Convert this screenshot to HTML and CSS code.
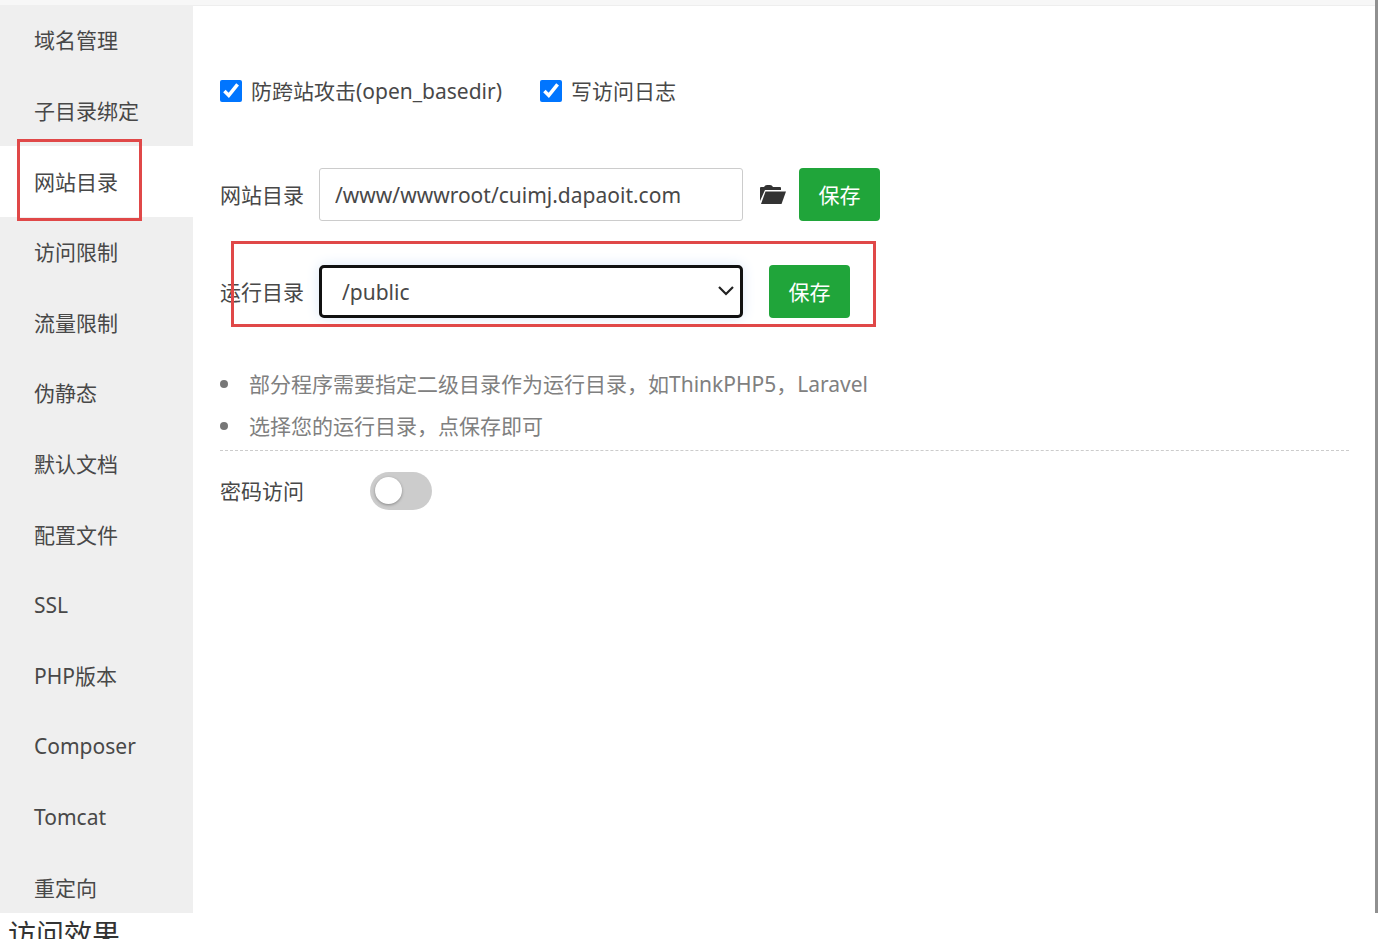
FILE: index.html
```html
<!DOCTYPE html>
<html lang="zh-CN">
<head>
<meta charset="utf-8">
<title>网站目录</title>
<link rel="stylesheet" href="styles.css">
</head>
<body>
<div class="dialog">
  <nav class="sidebar">
    <ul class="menu">
      <li class="menu-item"><a href="#">域名管理</a></li>
      <li class="menu-item"><a href="#">子目录绑定</a></li>
      <li class="menu-item active"><a href="#">网站目录</a></li>
      <li class="menu-item"><a href="#">访问限制</a></li>
      <li class="menu-item"><a href="#">流量限制</a></li>
      <li class="menu-item"><a href="#">伪静态</a></li>
      <li class="menu-item"><a href="#">默认文档</a></li>
      <li class="menu-item"><a href="#">配置文件</a></li>
      <li class="menu-item"><a href="#">SSL</a></li>
      <li class="menu-item"><a href="#">PHP版本</a></li>
      <li class="menu-item"><a href="#">Composer</a></li>
      <li class="menu-item"><a href="#">Tomcat</a></li>
      <li class="menu-item"><a href="#">重定向</a></li>
    </ul>
  </nav>
  <main class="content">
    <div class="checks">
      <label class="check"><input type="checkbox" checked>防跨站攻击(open_basedir)</label>
      <label class="check"><input type="checkbox" checked>写访问日志</label>
    </div>
    <div class="row">
      <label class="row-label" for="site-dir">网站目录</label>
      <input class="field" id="site-dir" type="text" value="/www/wwwroot/cuimj.dapaoit.com">
      <button class="browse" type="button" aria-label="选择目录">
        <svg width="26" height="20" viewBox="0 0 26 20"><path fill="#333" d="M0 16V3q0-1 1-1h3q1-2 3-2h3q2 0 3 2h7q1 0 1 1v2H5z"/><path fill="#333" d="M5.500 6.500H26L21.500 19H1z"/></svg>
      </button>
      <button class="save" type="button">保存</button>
    </div>
    <div class="row run-row">
      <label class="row-label" for="run-dir">运行目录</label>
      <div class="select-wrap">
        <select class="field run-select" id="run-dir"><option>/public</option></select>
        <svg class="chevron" width="16" height="10" viewBox="0 0 16 10"><path d="M1 1l7 7 7-7" fill="none" stroke="#222" stroke-width="2.200"/></svg>
      </div>
      <button class="save" type="button">保存</button>
    </div>
    <ul class="tips">
      <li>部分程序需要指定二级目录作为运行目录，如ThinkPHP5，Laravel</li>
      <li>选择您的运行目录，点保存即可</li>
    </ul>
    <div class="password">
      <label for="password-access">密码访问</label>
      <input class="switch" id="password-access" type="checkbox" role="switch">
    </div>
  </main>
</div>
<p class="caption">访问效果</p>
</body>
</html>
```
FILE: styles.css
```css
* {
  box-sizing: border-box;
}

body {
  margin: 0;
  height: 100vh;
  display: flex;
  flex-direction: column;
  overflow: hidden;
  background: #fff;
  color: #484848;
  font: 21px/28px "Noto Sans", "Noto Sans CJK SC", sans-serif;
}

input,
select,
button {
  margin: 0;
  font: inherit;
  color: inherit;
}

.dialog {
  flex: 1;
  min-height: 0;
  display: flex;
  padding-top: 5px;
  border-right: 3px solid #909090;
  background: #f7f7f7;
}

.sidebar {
  flex: 0 0 193px;
  overflow: hidden;
  background: #efefef;
}

.menu {
  display: flex;
  flex-direction: column;
  min-height: 918px;
  margin: 0;
  padding: 0;
  list-style: none;
}

.menu-item {
  flex: 1;
  display: flex;
  position: relative;
}

.menu-item a {
  flex: 1;
  display: flex;
  align-items: center;
  padding-left: 34px;
  color: inherit;
  text-decoration: none;
}

.active {
  background: #fff;
}

.active::after,
.run-row::after {
  content: "";
  position: absolute;
  border: 3px solid #e04848;
  pointer-events: none;
}

.active::after {
  inset: -7px 51px -4px 17px;
}

.content {
  flex: 1;
  min-width: 0;
  padding: 71px 26px 0 27px;
  border-top: 1px solid #eee;
  background: #fff;
}

.checks {
  display: flex;
  gap: 38px;
  margin-bottom: 63px;
}

.check {
  display: flex;
  align-items: center;
  gap: 9px;
}

.check input {
  width: 22px;
  height: 22px;
  accent-color: #0075ff;
}

.row {
  display: flex;
  align-items: center;
  width: fit-content;
  position: relative;
  margin-bottom: 44px;
}

.row-label {
  width: 99px;
}

.field {
  width: 424px;
  height: 53px;
  padding: 0 15px;
  border: 1px solid #ccc;
  border-radius: 3px;
  background: #fff;
}

.browse {
  display: flex;
  padding: 0;
  margin: 0 13px 0 17px;
  border: 0;
  background: none;
}

.save {
  width: 81px;
  height: 53px;
  padding: 0;
  border: 0;
  border-radius: 4px;
  background: #20a53a;
  color: #fff;
}

.run-row::after {
  inset: -24px -26px -9px 11px;
}

.select-wrap {
  position: relative;
  margin-right: 26px;
}

.run-select {
  display: block;
  appearance: none;
  padding: 0 20px;
  border: 3px solid #111;
  border-radius: 5px;
  box-shadow: 0 0 14px #dce8f8;
}

.chevron {
  position: absolute;
  top: 21px;
  right: 9px;
  pointer-events: none;
}

.tips {
  margin: 0;
  padding: 1px 0 3px;
  border-bottom: 1px dashed #ccc;
  list-style: none;
  color: #808080;
  line-height: 42px;
}

.tips li {
  display: flex;
  align-items: center;
  gap: 21px;
}

.tips li::before {
  content: "";
  width: 8px;
  height: 8px;
  border-radius: 50%;
  background: #777;
}

.password {
  display: flex;
  align-items: center;
  gap: 66px;
  padding-top: 21px;
}

.switch {
  appearance: none;
  display: flex;
  width: 62px;
  height: 38px;
  padding: 5px;
  border-radius: 19px;
  background: #ccc;
}

.switch::before {
  content: "";
  width: 27px;
  height: 27px;
  border-radius: 50%;
  background: #fff;
  box-shadow: 0 1px 3px #888;
}

.caption {
  height: 26px;
  margin: 0;
  padding-left: 8px;
  color: #333;
  font-size: 28px;
  line-height: 42px;
}
```
